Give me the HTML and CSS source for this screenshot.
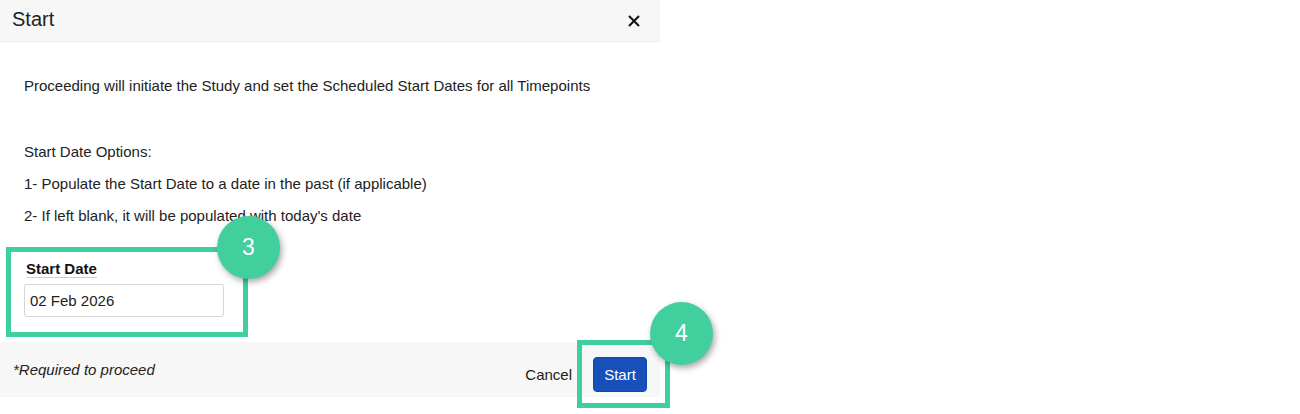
FILE: index.html
```html
<!DOCTYPE html>
<html lang="en">
<head>
    <meta charset="UTF-8">
    <meta name="viewport" content="width=device-width, initial-scale=1.0">
    <title>Start</title>
    <link rel="stylesheet" href="styles.css">
</head>
<body>
    <div class="modal">
        <div class="modal-header">
            <h2>Start</h2>
            <button class="close-btn" aria-label="Close">
                <svg width="12" height="12" viewBox="0 0 12 12">
                    <path d="M1 1 L11 11 M11 1 L1 11" stroke="#111" stroke-width="2" fill="none"/>
                </svg>
            </button>
        </div>

        <div class="modal-body">
            <p class="intro">Proceeding will initiate the Study and set the Scheduled Start Dates for all Timepoints</p>
            <p class="options-title">Start Date Options:</p>
            <p class="option">1- Populate the Start Date to a date in the past (if applicable)</p>
            <p class="option">2- If left blank, it will be populated with today's date</p>

            <div class="field">
                <label for="start-date">Start Date</label>
                <input type="text" id="start-date" value="02 Feb 2026">
            </div>
        </div>

        <div class="modal-footer">
            <span class="required-note">*Required to proceed</span>
            <div class="footer-actions">
                <button class="cancel-btn">Cancel</button>
                <button class="start-btn">Start</button>
            </div>
        </div>

        <!-- Tutorial callouts -->
        <div class="callout-box box-date"></div>
        <div class="callout-step step-3">3</div>
        <div class="callout-box box-start"></div>
        <div class="callout-step step-4">4</div>
    </div>
</body>
</html>
```

FILE: styles.css
```css
/* General Reset */
* {
    margin: 0;
    padding: 0;
    box-sizing: border-box;
}

body {
    font-family: "Liberation Sans", Arial, sans-serif;
    background-color: #ffffff;
    color: #222222;
    font-size: 15px;
    min-height: 414px;
}

/* Modal */
.modal {
    position: relative;
    width: 660px;
    background-color: #ffffff;
    padding-bottom: 17px;
}

.modal-header {
    height: 42px;
    background-color: #f7f7f7;
    border-bottom: 1px solid #ececec;
    display: flex;
    justify-content: space-between;
    align-items: center;
    padding: 0 20px 0 12px;
}

.modal-header h2 {
    font-size: 20px;
    font-weight: normal;
    color: #222222;
    margin-top: -2px;
}

.close-btn {
    background: none;
    border: none;
    cursor: pointer;
    display: flex;
}

/* Body */
.modal-body {
    padding: 34px 24px 25px;
}

.modal-body p {
    line-height: 20px;
}

.options-title {
    margin-top: 46px;
}

.option {
    margin-top: 12px;
}

.field {
    margin-top: 34px;
    display: flex;
    flex-direction: column;
    align-items: flex-start;
}

.field label {
    font-weight: bold;
    line-height: 17px;
    margin-left: 2px;
    border-bottom: 1px solid #cfcfcf;
    color: #111111;
}

.field input {
    margin-top: 6px;
    width: 200px;
    height: 33px;
    padding: 0 5px;
    border: 1px solid #d6d6d6;
    border-radius: 3px;
    font-family: "Liberation Sans", Arial, sans-serif;
    font-size: 15px;
    color: #222222;
}

/* Footer */
.modal-footer {
    height: 55px;
    background-color: #f7f7f7;
    display: flex;
    justify-content: space-between;
    align-items: center;
    padding: 10px 13px 0;
}

.required-note {
    align-self: flex-start;
    margin-top: 8px;
    font-style: italic;
    line-height: 20px;
}

.footer-actions {
    display: flex;
    align-items: center;
}

.cancel-btn {
    background: none;
    border: none;
    font-family: "Liberation Sans", Arial, sans-serif;
    font-size: 15px;
    color: #222222;
    margin-right: 21px;
    cursor: pointer;
}

.start-btn {
    width: 54px;
    height: 35px;
    background-color: #1750b9;
    color: #ffffff;
    border: 1px solid #1446a6;
    border-radius: 4px;
    font-family: "Liberation Sans", Arial, sans-serif;
    font-size: 15px;
    cursor: pointer;
}

/* Tutorial callouts (overlay) */
.callout-box {
    position: absolute;
    border: 5px solid #3fcf9c;
}

.box-date {
    left: 6px;
    top: 247px;
    width: 242px;
    height: 90px;
}

.box-start {
    left: 577px;
    top: 340px;
    width: 93px;
    height: 68px;
}

.callout-step {
    position: absolute;
    width: 63px;
    height: 63px;
    border-radius: 50%;
    background-color: #41cf9d;
    color: #ffffff;
    font-size: 23px;
    display: flex;
    justify-content: center;
    align-items: center;
    box-shadow: 2px 3px 6px rgba(0, 0, 0, 0.35);
}

.step-3 {
    left: 217px;
    top: 216px;
}

.step-4 {
    left: 650px;
    top: 302px;
}
```
